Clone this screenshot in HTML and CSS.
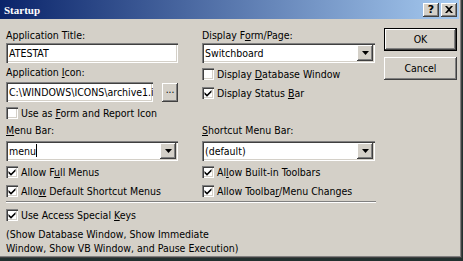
FILE: index.html
```html
<!DOCTYPE html>
<html lang="en">
<head>
  <meta charset="UTF-8">
  <title>Startup</title>
  <link rel="stylesheet" href="styles.css">
</head>
<body>
  <div class="dialog">
    <div class="frame">
      <div class="titlebar">
        <span class="title">Startup</span>
        <div class="caption-btns">
          <span class="cap-btn help">?</span>
          <span class="cap-btn">
            <svg width="8" height="7" viewBox="0 0 8 7"><path d="M0 0h2l2 2 2-2h2L5 3.5 8 7H6L4 5 2 7H0l3-3.5z" fill="#000"/></svg>
          </span>
        </div>
      </div>

      <div class="content">
        <div class="form">
          <!-- top part -->
          <div class="cols top">
            <div class="col">
              <div class="lbl">Application Title:</div>
              <div class="field">ATESTAT</div>
              <div class="lbl gap">Application <u>I</u>con:</div>
              <div class="icon-row">
                <div class="field icon-field">C:\WINDOWS\ICONS\archive1.ico</div>
                <div class="raised dots">...</div>
              </div>
              <div class="check first"><span class="box"></span><span>Use as <u>F</u>orm and Report Icon</span></div>
            </div>
            <div class="col">
              <div class="lbl">Display F<u>o</u>rm/Page:</div>
              <div class="field combo">Switchboard<span class="raised arrow"><svg width="7" height="4" viewBox="0 0 7 4"><path d="M0 0h7L3.5 4z" fill="#000"/></svg></span></div>
              <div class="check first"><span class="box"></span><span>Display <u>D</u>atabase Window</span></div>
              <div class="check"><span class="box on"><svg width="12" height="12" viewBox="0 0 12 12"><path d="M2.5 5 5 7.5 9.5 3v2.2L5 9.7 2.5 7.2z" fill="#000"/></svg></span><span>Display Status <u>B</u>ar</span></div>
            </div>
          </div>

          <!-- menu bars -->
          <div class="cols">
            <div class="col">
              <div class="lbl"><u>M</u>enu Bar:</div>
              <div class="field combo">menu<span class="caret"></span><span class="raised arrow"><svg width="7" height="4" viewBox="0 0 7 4"><path d="M0 0h7L3.5 4z" fill="#000"/></svg></span></div>
              <div class="check first"><span class="box on"><svg width="12" height="12" viewBox="0 0 12 12"><path d="M2.5 5 5 7.5 9.5 3v2.2L5 9.7 2.5 7.2z" fill="#000"/></svg></span><span>Allow F<u>u</u>ll Menus</span></div>
              <div class="check"><span class="box on"><svg width="12" height="12" viewBox="0 0 12 12"><path d="M2.5 5 5 7.5 9.5 3v2.2L5 9.7 2.5 7.2z" fill="#000"/></svg></span><span>Allo<u>w</u> Default Shortcut Menus</span></div>
            </div>
            <div class="col">
              <div class="lbl"><u>S</u>hortcut Menu Bar:</div>
              <div class="field combo">(default)<span class="raised arrow"><svg width="7" height="4" viewBox="0 0 7 4"><path d="M0 0h7L3.5 4z" fill="#000"/></svg></span></div>
              <div class="check first"><span class="box on"><svg width="12" height="12" viewBox="0 0 12 12"><path d="M2.5 5 5 7.5 9.5 3v2.2L5 9.7 2.5 7.2z" fill="#000"/></svg></span><span>Al<u>l</u>ow Built-in Toolbars</span></div>
              <div class="check"><span class="box on"><svg width="12" height="12" viewBox="0 0 12 12"><path d="M2.5 5 5 7.5 9.5 3v2.2L5 9.7 2.5 7.2z" fill="#000"/></svg></span><span>Allow Toolba<u>r</u>/Menu Changes</span></div>
            </div>
          </div>

          <div class="separator"></div>

          <div class="check special"><span class="box on"><svg width="12" height="12" viewBox="0 0 12 12"><path d="M2.5 5 5 7.5 9.5 3v2.2L5 9.7 2.5 7.2z" fill="#000"/></svg></span><span>Use Access Special <u>K</u>eys</span></div>
          <p class="note">(Show Database Window, Show Immediate<br>Window, Show VB Window, and Pause Execution)</p>
        </div>

        <div class="buttons">
          <div class="button default"><span class="raised">OK</span></div>
          <div class="button"><span class="raised">Cancel</span></div>
        </div>
      </div>
    </div>
  </div>
</body>
</html>
```

FILE: styles.css
```css
* {
  box-sizing: border-box;
}
body {
  margin: 0;
  background-color: #22302f;
  font-family: "DejaVu Sans Condensed", "DejaVu Sans", sans-serif;
  font-size: 10.5px;
  color: #000;
}
.dialog {
  width: 462px;
  height: 258px;
  background-color: #d4d0c8;
  border-right: 1px solid #404040;
  border-bottom: 1px solid #404040;
}
.frame {
  height: 100%;
  border-right: 1px solid #808080;
  border-bottom: 1px solid #808080;
  padding: 0 1px 1px 0;
}
.titlebar {
  height: 19px;
  background: linear-gradient(to right, #0a246a, #a6caf0);
  display: flex;
  align-items: center;
  justify-content: space-between;
  padding: 0 2px 0 4px;
}
.title {
  color: #fff;
  font: bold 11px "Liberation Serif", serif;
}
.caption-btns {
  display: flex;
  gap: 2px;
}
.cap-btn {
  width: 16px;
  height: 14px;
  background-color: #d4d0c8;
  box-shadow: inset -1px -1px #404040, inset 1px 1px #fff, inset -2px -2px #808080;
  display: flex;
  align-items: center;
  justify-content: center;
}
.cap-btn.help {
  font: bold 11px "DejaVu Sans", sans-serif;
  line-height: 14px;
}

/* raised and sunken 3d edges */
.raised {
  background-color: #d4d0c8;
  box-shadow: inset -1px -1px #404040, inset 1px 1px #fff, inset -2px -2px #808080;
}
.field {
  position: relative;
  height: 20px;
  background-color: #fff;
  box-shadow: inset 1px 1px #808080, inset 2px 2px #404040, inset -1px -1px #fff, inset -2px -2px #d4d0c8;
  padding: 0 3px;
  line-height: 20px;
  white-space: nowrap;
  overflow: hidden;
}

.content {
  display: flex;
  padding-left: 6px;
}
.form {
  width: 370px;
  padding-top: 10px;
}
.cols {
  display: grid;
  grid-template-columns: 172px 173px;
  column-gap: 24px;
}
.cols.top {
  height: 95px;
}
.lbl {
  height: 13px;
  line-height: 13px;
  margin-bottom: 1px;
}
.lbl.gap {
  margin-top: 3px;
  margin-bottom: 3px;
}
.cols:not(.top) .lbl {
  margin-bottom: 4px;
}
.icon-row {
  display: flex;
  align-items: flex-start;
}
.icon-field {
  width: 148px;
}
.dots {
  width: 16px;
  height: 19px;
  margin-left: 9px;
  margin-top: 1px;
  text-align: center;
  line-height: 14px;
  font-size: 10px;
}
.combo {
  padding-right: 20px;
}
.arrow {
  position: absolute;
  top: 2px;
  right: 2px;
  width: 16px;
  height: 16px;
  display: flex;
  align-items: center;
  justify-content: center;
}
.caret {
  display: inline-block;
  width: 1px;
  height: 13px;
  background-color: #000;
  vertical-align: -2px;
}

.check {
  display: flex;
  align-items: center;
  height: 14px;
  margin-top: 5px;
  white-space: nowrap;
}
.check.first {
  margin-top: 4px;
}
.box {
  width: 12px;
  height: 12px;
  margin-right: 3px;
  background-color: #fff;
  box-shadow: inset 1px 1px #808080, inset 2px 2px #404040, inset -1px -1px #fff, inset -2px -2px #d4d0c8;
  flex-shrink: 0;
}
.box svg {
  display: block;
}
.separator {
  width: 370px;
  margin-top: 3px;
  border-top: 1px solid #808080;
  border-bottom: 1px solid #fff;
}
.check.special {
  margin-top: 5px;
}
.note {
  margin: 5px 0 0;
  line-height: 14px;
}

.buttons {
  margin-left: 8px;
  padding-top: 9px;
  width: 73px;
}
.button {
  height: 23px;
  margin-bottom: 6px;
}
.button .raised {
  display: block;
  height: 100%;
  text-align: center;
  line-height: 23px;
}
.button.default {
  border: 1px solid #000;
}
.button.default .raised {
  line-height: 21px;
}
```
